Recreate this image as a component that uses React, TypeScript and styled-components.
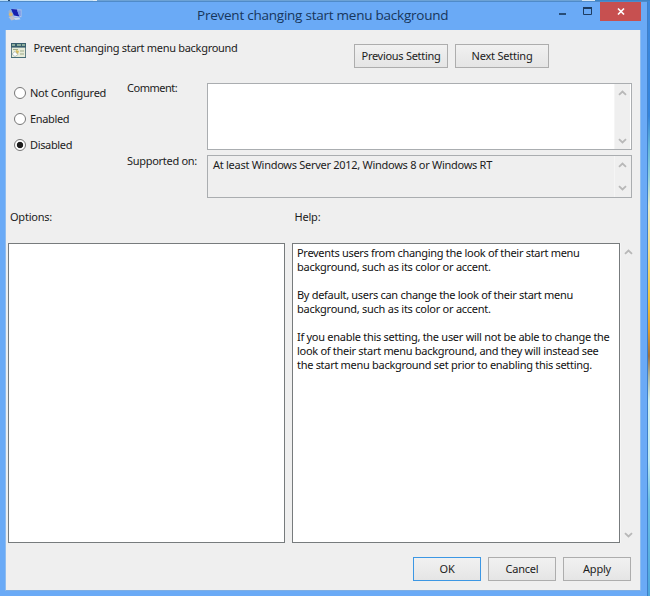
import React from 'react';
import styled, { createGlobalStyle } from 'styled-components';

const GlobalStyle = createGlobalStyle`
  * { box-sizing: border-box; }
  body { margin: 0; overflow: hidden; font: 11px/14px "Noto Sans", "Open Sans", sans-serif; color: #1c1c1c; }
`;

const Desktop = styled.div`
  display: grid;
  grid-template-columns: 648px 2px;
  grid-template-rows: 1px 595px;
  width: 650px;
  height: 596px;
`;

const DesktopTop = styled.div`
  grid-column: 1 / 3;
  background: linear-gradient(90deg, #b9dcf5 0 8px, #27496b 8px 10px, #c5e2f7 10px 93px, #e4edf4 93px 97px, #6da2d4 97px 582px, #d7e7f5 582px 595px, #3d84c6 595px);
`;

const DesktopSide = styled.div`
  background: linear-gradient(180deg, #3d88dc 0, #3484dc 115px, #62b6d8 145px, #8fd0dc 175px, #e6ecc9 205px, #f2df8e 250px, #eec43c 300px, #dd9b2c 330px, #a0713c 355px, #aeb8a0 375px, #d0f0ee 400px, #bdeaf2 460px, #6cc0e4 500px, #4ca6dc 595px);
`;

const Window = styled.main`
  display: flex;
  flex-direction: column;
  padding: 0 6px 5px 5px;
  background: #6aaaf6;
  border-top: 1px solid #4f8bc9;
  border-right: 1px solid #3f7fc8;
`;

const TitleBar = styled.header`
  display: grid;
  grid-template-columns: 192px 1fr auto;
  flex: 0 0 28px;
`;

const TitleIcon = styled.div`
  padding: 5px 0 0 3px;
  svg { display: block; }
`;

const Title = styled.h1`
  margin: 4px 0 0;
  font: 400 13.5px/18px "Open Sans", "Noto Sans", sans-serif;
  letter-spacing: -0.24px;
  color: #17365c;
  white-space: nowrap;
`;

const WindowControls = styled.div`
  display: flex;
  height: 19px;
  svg { display: block; }
`;

const ControlButton = styled.button<{ $close?: boolean }>`
  width: ${p => (p.$close ? 41 : 25)}px;
  height: 19px;
  padding: 0;
  border: 0;
  background: ${p => (p.$close ? '#c75050' : 'transparent')};
`;

const Client = styled.section`
  display: flex;
  flex-direction: column;
  flex: 1;
  min-height: 0;
  background: #efefef;
  border: 1px solid #8fbdf0;
  border-top: 0;
  border-bottom-color: #7eaee4;
`;

const Text = styled.span<{ $track?: number }>`
  display: block;
  letter-spacing: ${p => p.$track ?? -0.29}px;
  white-space: nowrap;
`;

const PolicyHeader = styled.div`
  display: grid;
  grid-template-columns: 22.5px 320.5px auto;
  align-items: start;
  height: 53px;
  padding: 13px 0 0 5px;
`;

const HeaderLabel = styled.div`
  margin-top: -2px;
`;

const PushButton = styled.button<{ $width: number; $primary?: boolean }>`
  display: flex;
  align-items: center;
  justify-content: center;
  width: ${p => p.$width}px;
  height: 24px;
  padding: 0 0 1px;
  font: inherit;
  color: #1c1c1c;
  background: linear-gradient(#f1f1f1, #e5e5e5);
  border: 1px solid ${p => (p.$primary ? '#3c97e4' : '#adadad')};
`;

const NavButtons = styled.div`
  display: flex;
  gap: 7px;
  padding-top: 1px;
`;

const SettingGrid = styled.div`
  display: grid;
  grid-template-columns: 112px 81px 425px;
  height: 115px;
  padding-left: 8px;
`;

const RadioGroup = styled.div`
  display: flex;
  flex-direction: column;
  gap: 12px;
  padding-top: 3px;
`;

const RadioRow = styled.label`
  display: flex;
  align-items: center;
  gap: 4px;
  height: 14px;
`;

const RadioMark = styled.span<{ $checked?: boolean }>`
  width: 12px;
  height: 12px;
  border: 1px solid #777;
  border-radius: 50%;
  background: ${p => (p.$checked ? 'radial-gradient(circle, #1d1d1d 0 2.8px, #fff 3.6px)' : '#fff')};
`;

const FieldLabels = styled.div`
  display: flex;
  flex-direction: column;
  gap: 59px;
  margin-top: -2px;
  padding-left: 1px;
`;

const Fields = styled.div`
  display: flex;
  flex-direction: column;
  gap: 5px;
`;

const Field = styled.div<{ $height: number; $readOnly?: boolean }>`
  display: flex;
  justify-content: space-between;
  height: ${p => p.$height}px;
  padding: 0 1px 0 5px;
  background: ${p => (p.$readOnly ? '#efefef' : '#fff')};
  border: 1px solid #aaadb0;
`;

const FieldText = styled.div`
  padding-top: 2px;
`;

const ScrollBar = styled.div<{ $top?: number; $bottom?: number }>`
  display: flex;
  flex-direction: column;
  justify-content: space-between;
  align-items: center;
  width: 16px;
  padding: ${p => p.$top ?? 6}px 0 ${p => p.$bottom ?? 5}px;
  background: #efefef;
  border-left: 1px solid #f5f5f5;
  svg { display: block; }
`;

const PaneLabels = styled.div`
  display: grid;
  grid-template-columns: 284.5px 1fr;
  height: 45px;
  padding: 12px 0 0 4px;
`;

const Panes = styled.div`
  display: grid;
  grid-template-columns: 277px 335px 16px;
  height: 300px;
  padding-left: 2px;
`;

const Pane = styled.div`
  background: #fff;
  border: 1px solid #777b7d;
`;

const HelpPane = styled(Pane)`
  display: flex;
  flex-direction: column;
  gap: 14px;
  margin-left: 7px;
  padding: 2px 0 0 4px;
  color: #111;
`;

const Footer = styled.footer`
  display: flex;
  justify-content: flex-end;
  gap: 7px;
  padding: 14px 9px 0 0;
`;

const Chevron = ({ down = false }: { down?: boolean }) => (
  <svg width="9" height="6" viewBox="0 0 9 6">
    <path d={down ? 'M1 1.2 4.5 4.5 8 1.2' : 'M1 4.8 4.5 1.5 8 4.8'} fill="none" stroke="#b8b8b8" strokeWidth="1.8" />
  </svg>
);

const ComputerIcon = () => (
  <svg width="15" height="16" viewBox="0 0 15 16">
    <path d="M5 2 13.5 2.5V10L6 10.5Z" fill="#b9cdf2" stroke="#8fb0e6" strokeWidth=".6" />
    <path d="M3 2 9 2.5 11.5 9.5 6 8.5Z" fill="#1720ad" />
    <path d="M9 3.2H12.8V9H11.2Z" fill="#7b99e6" />
    <path d="M.5 4 3 2 4.5 8 1 9.5Z" fill="#a0b1ca" />
    <circle cx="2.8" cy="7.5" r="2" fill="#d8b878" />
    <path d="M.5 10 5 8.8 8 12 3.5 13.5Z" fill="#c0bfc9" />
    <path d="M6 11 11 10.5 12.5 12.3 7.5 13Z" fill="#c9d7ec" />
  </svg>
);

const PolicyIcon = () => (
  <svg width="15" height="15" viewBox="0 0 15 15">
    <path d="M.5 .5H14.5V14.5H.5Z" fill="#e8ecd9" stroke="#627f86" />
    <path d="M0 0H15V4.6H0Z" fill="#385e6d" />
    <path d="M1 2H4M6 2H10M11 2H14" stroke="#a8c7ad" strokeWidth="1.3" />
    <path d="M2 6.5H7M9 8H13M9 11H13" stroke="#9ba98a" />
    <path d="M5 7 8 8 7 11 4 11Z" fill="#d6bd62" />
    <path d="M1 11 4 8.5 7 11.5 4 13.5Z" fill="#fff" stroke="#91a2a4" strokeWidth=".6" />
    <path d="M0 14.5H15" stroke="#466d77" />
  </svg>
);

const helpParagraphs: { line: string; track: number }[][] = [
  [
    { line: 'Prevents users from changing the look of their start menu', track: -0.3 },
    { line: 'background, such as its color or accent.', track: -0.25 },
  ],
  [
    { line: 'By default, users can change the look of their start menu', track: -0.3 },
    { line: 'background, such as its color or accent.', track: -0.25 },
  ],
  [
    { line: 'If you enable this setting, the user will not be able to change the', track: -0.28 },
    { line: 'look of their start menu background, and they will instead see', track: -0.29 },
    { line: 'the start menu background set prior to enabling this setting.', track: -0.3 },
  ],
];

export default function App() {
  return (
    <Desktop>
      <GlobalStyle />
      <DesktopTop />
      <Window>
        <TitleBar>
          <TitleIcon><ComputerIcon /></TitleIcon>
          <Title>Prevent changing start menu background</Title>
          <WindowControls>
            <ControlButton aria-label="Minimize"><svg width="25" height="19"><path d="M9 12H16" stroke="#284d77" strokeWidth="2" /></svg></ControlButton>
            <ControlButton aria-label="Maximize"><svg width="25" height="19"><path d="M8.5 6.5H16.5V12.5H8.5Z" fill="none" stroke="#1d3c61" /><path d="M8 6H17" stroke="#1d3c61" strokeWidth="2" /></svg></ControlButton>
            <ControlButton $close aria-label="Close"><svg width="41" height="19"><path d="M18 6.5 24 12.5M24 6.5 18 12.5" stroke="#fff" strokeWidth="1.7" /></svg></ControlButton>
          </WindowControls>
        </TitleBar>
        <Client>
          <PolicyHeader>
            <PolicyIcon />
            <HeaderLabel><Text $track={-0.3}>Prevent changing start menu background</Text></HeaderLabel>
            <NavButtons>
              <PushButton $width={94}><Text $track={-0.29}>Previous Setting</Text></PushButton>
              <PushButton $width={94}><Text $track={-0.22}>Next Setting</Text></PushButton>
            </NavButtons>
          </PolicyHeader>
          <SettingGrid>
            <RadioGroup>
              <RadioRow><RadioMark /><Text $track={-0.26}>Not Configured</Text></RadioRow>
              <RadioRow><RadioMark /><Text $track={-0.36}>Enabled</Text></RadioRow>
              <RadioRow><RadioMark $checked /><Text $track={-0.34}>Disabled</Text></RadioRow>
            </RadioGroup>
            <FieldLabels>
              <Text $track={-0.48}>Comment:</Text>
              <Text>Supported on:</Text>
            </FieldLabels>
            <Fields>
              <Field $height={67}><FieldText /><ScrollBar><Chevron /><Chevron down /></ScrollBar></Field>
              <Field $height={43} $readOnly>
                <FieldText><Text $track={-0.28}>At least Windows Server 2012, Windows 8 or Windows RT</Text></FieldText>
                <ScrollBar $bottom={6}><Chevron /><Chevron down /></ScrollBar>
              </Field>
            </Fields>
          </SettingGrid>
          <PaneLabels>
            <Text $track={-0.22}>Options:</Text>
            <Text $track={-0.2}>Help:</Text>
          </PaneLabels>
          <Panes>
            <Pane />
            <HelpPane>
              {helpParagraphs.map((lines, i) => (
                <div key={i}>{lines.map(({ line, track }) => <Text key={line} $track={track}>{line}</Text>)}</div>
              ))}
            </HelpPane>
            <ScrollBar><Chevron /><Chevron down /></ScrollBar>
          </Panes>
          <Footer>
            <PushButton $width={68} $primary><Text $track={-0.2}>OK</Text></PushButton>
            <PushButton $width={68}><Text $track={-0.2}>Cancel</Text></PushButton>
            <PushButton $width={68}><Text $track={-0.2}>Apply</Text></PushButton>
          </Footer>
        </Client>
      </Window>
      <DesktopSide />
    </Desktop>
  );
}
